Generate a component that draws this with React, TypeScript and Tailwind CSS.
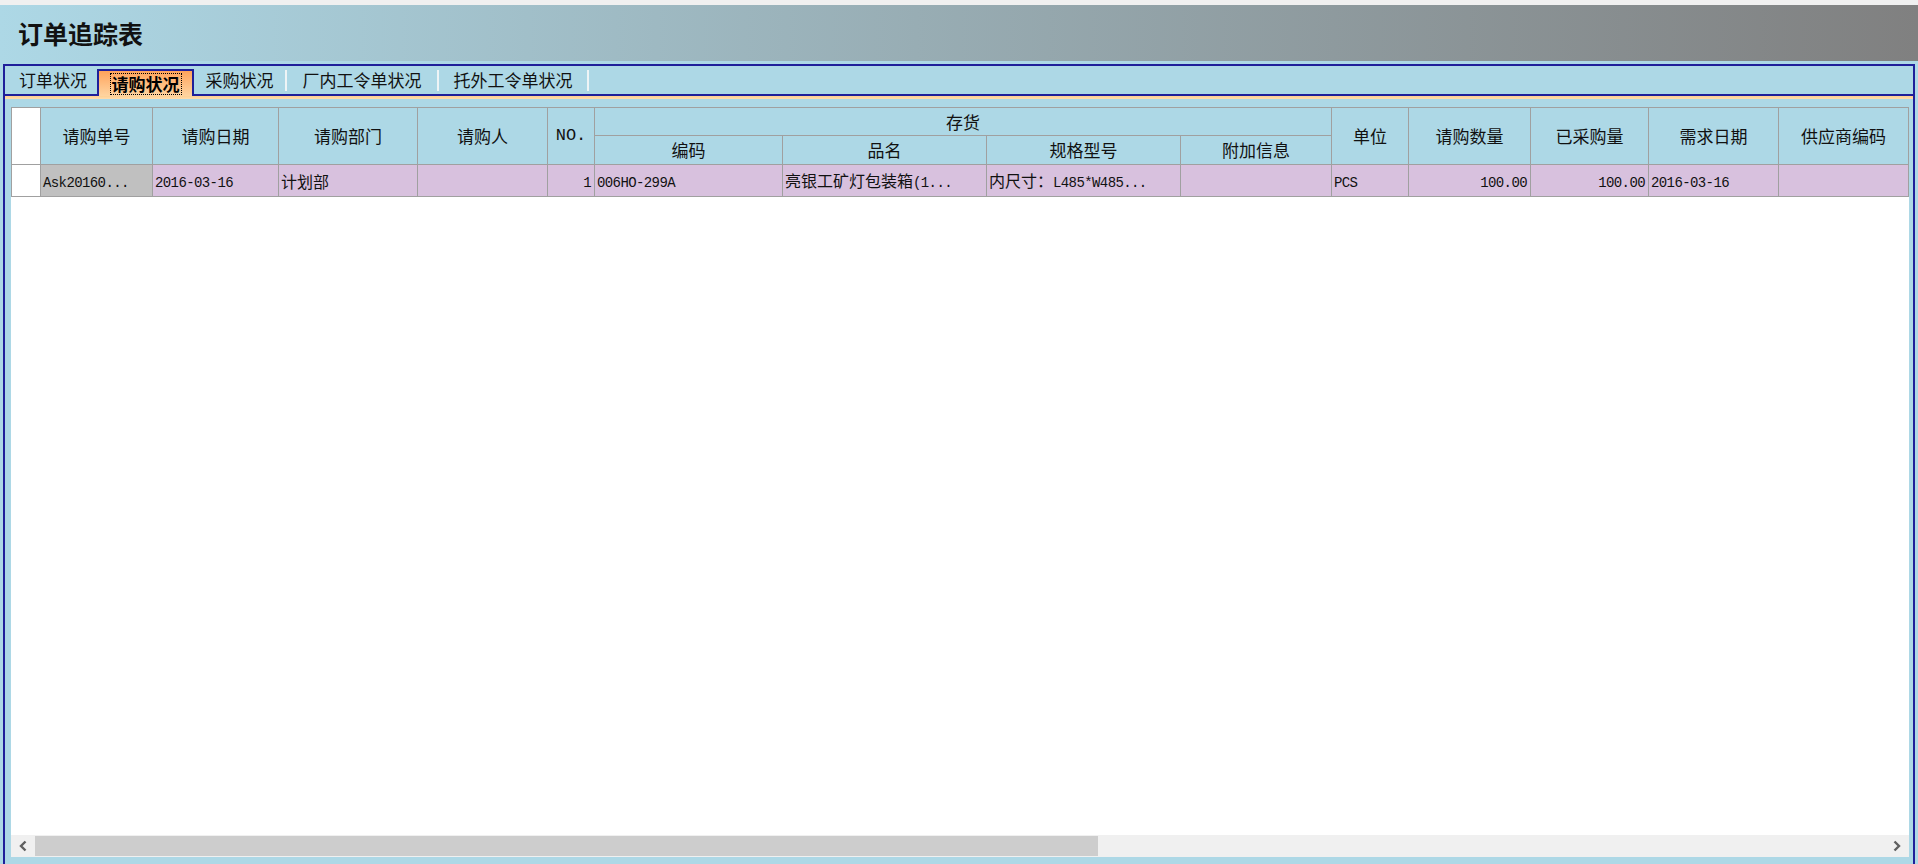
const cjk = "font-['Noto_Sans_CJK_SC',sans-serif]";

// widths of the visible grid columns, row header first
const cols = [29, 112, 126, 139, 130, 47, 188, 204, 194, 151, 77, 122, 118, 130, 130];

const row = [
  { text: "Ask20160...", bg: "bg-[#c0c0c0]" },
  { text: "2016-03-16" },
  { text: "计划部" },
  { text: "" },
  { text: "1", right: true },
  { text: "006HO-299A" },
  { text: "亮银工矿灯包装箱(1..." },
  { text: "内尺寸：L485*W485..." },
  { text: "" },
  { text: "PCS" },
  { text: "100.00", right: true },
  { text: "100.00", right: true },
  { text: "2016-03-16" },
  { text: "" },
];

function Mixed({ text }: { text: string }) {
  const parts = text.split(/([\x00-\x7F]+)/).filter(Boolean);
  return (
    <>
      {parts.map((p, i) =>
        /^[\x00-\x7F]+$/.test(p) ? (
          <span key={i} className="font-['Liberation_Mono',monospace] text-[14px] tracking-[-0.6px]">
            {p}
          </span>
        ) : (
          <span key={i} className={`${cjk} text-[16px]`}>
            {p}
          </span>
        )
      )}
    </>
  );
}

function Tab({ label, width }: { label: string; width: string }) {
  return (
    <div className={`${width} h-full flex items-center justify-center text-[17px] text-[#111]`}>
      {label}
    </div>
  );
}

function Sep() {
  return <div className="w-[2px] h-[21px] mb-[3px] self-end border-l border-[#b4bcc0] border-r border-[#eef4f6]" />;
}

function Chevron({ dir }: { dir: "left" | "right" }) {
  return (
    <svg width="10" height="12" viewBox="0 0 10 12">
      <path
        d={dir === "left" ? "M7.5 1.5 L3 6 L7.5 10.5" : "M2.5 1.5 L7 6 L2.5 10.5"}
        fill="none"
        stroke="#606060"
        strokeWidth="2.4"
      />
    </svg>
  );
}

export default function App() {
  const th = "border border-[#a0a0a0] bg-[#add8e6] font-normal text-[17px] text-[#111] p-0";
  return (
    <div className={`w-[1918px] h-[864px] overflow-hidden bg-[#f0f0f0] flex flex-col ${cjk}`}>
      <div className="h-[5px] bg-[#f0f0f0]" />

      {/* title bar */}
      <div className="h-[56px] shrink-0 bg-gradient-to-r from-[#add8e6] to-[#808080] flex items-center pl-[18px]">
        <h1 className="text-[25px] font-bold text-[#111] leading-none">订单追踪表</h1>
      </div>

      <div className="flex-1 bg-[#add8e6] pt-[3px] px-[3px] min-h-0">
        <div className="h-full border-2 border-b-0 border-[#1f1f9a] flex flex-col">
          {/* tab strip */}
          <div className="h-[30px] shrink-0 flex items-end border-b-2 border-[#1f1f9a] pl-[4px]">
            <Tab label="订单状况" width="w-[88px]" />
            <div className="w-[97px] h-[27px] -mb-[2px] border-2 border-b-0 border-[#1f1f9a] bg-gradient-to-b from-[#ffa35a] to-[#ffd4a0] flex items-center justify-center">
              <span className="text-[17px] font-bold text-black outline-1 outline-dotted outline-black leading-[20px] px-[1px]">
                请购状况
              </span>
            </div>
            <Tab label="采购状况" width="w-[91px]" />
            <Sep />
            <Tab label="厂内工令单状况" width="w-[150px]" />
            <Sep />
            <Tab label="托外工令单状况" width="w-[148px]" />
            <Sep />
          </div>
          <div className="h-[3px] shrink-0 bg-gradient-to-b from-[#ffcf90] to-[#ffdcae]" />

          {/* grid area */}
          <div className="flex-1 min-h-0 pt-[8px] pl-[6px] pr-[4px] pb-[7px] flex flex-col">
            <div className="flex-1 min-h-0 bg-white flex flex-col overflow-hidden">
              <div className="flex-1 min-h-0 overflow-hidden">
                <table className="border-collapse table-fixed" style={{ width: cols.reduce((a, b) => a + b, 0) }}>
                  <colgroup>
                    {cols.map((w, i) => (
                      <col key={i} style={{ width: w }} />
                    ))}
                  </colgroup>
                  <thead>
                    <tr className="h-[28px]">
                      <th rowSpan={2} className="border border-[#a0a0a0] bg-white p-0" />
                      <th rowSpan={2} className={th}>请购单号</th>
                      <th rowSpan={2} className={th}>请购日期</th>
                      <th rowSpan={2} className={th}>请购部门</th>
                      <th rowSpan={2} className={th}>请购人</th>
                      <th rowSpan={2} className={`${th} font-['Liberation_Mono',monospace] text-[12px]`}>NO.</th>
                      <th colSpan={4} className={`${th} text-[16px]`}>存货</th>
                      <th rowSpan={2} className={th}>单位</th>
                      <th rowSpan={2} className={th}>请购数量</th>
                      <th rowSpan={2} className={th}>已采购量</th>
                      <th rowSpan={2} className={th}>需求日期</th>
                      <th rowSpan={2} className={th}>供应商编码</th>
                    </tr>
                    <tr className="h-[29px]">
                      <th className={th}>编码</th>
                      <th className={th}>品名</th>
                      <th className={th}>规格型号</th>
                      <th className={th}>附加信息</th>
                    </tr>
                  </thead>
                  <tbody>
                    <tr className="h-[32px]">
                      <td className="border border-[#a0a0a0] bg-white p-0" />
                      {row.map((c, i) => (
                        <td
                          key={i}
                          className={`border border-[#a0a0a0] ${c.bg ?? "bg-[#d8c1de]"} ${
                            c.right ? "text-right pr-[3px]" : "text-left pl-[2px]"
                          } whitespace-nowrap overflow-hidden text-[#111] leading-none`}
                        >
                          <Mixed text={c.text} />
                        </td>
                      ))}
                    </tr>
                  </tbody>
                </table>
              </div>

              {/* horizontal scrollbar */}
              <div className="h-[22px] shrink-0 bg-[#f0f0f0] flex items-stretch">
                <div className="w-[24px] flex items-center justify-center">
                  <Chevron dir="left" />
                </div>
                <div className="w-[1063px] bg-[#cdcdcd] my-[1px]" />
                <div className="flex-1" />
                <div className="w-[24px] flex items-center justify-center">
                  <Chevron dir="right" />
                </div>
              </div>
            </div>
          </div>
        </div>
      </div>
    </div>
  );
}
